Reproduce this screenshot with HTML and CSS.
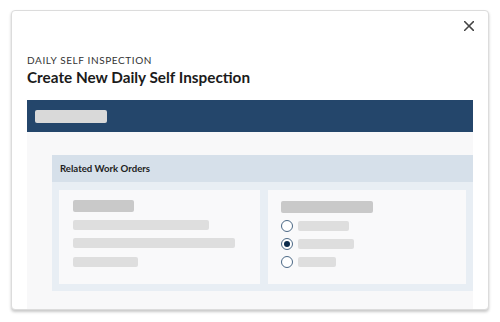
FILE: index.html
```html
<!DOCTYPE html>
<html lang="en">
<head>
<meta charset="utf-8">
<title>Create New Daily Self Inspection</title>
<link rel="stylesheet" href="styles.css">
</head>
<body>
<div class="modal">
  <div class="topbar">
    <button class="close" aria-label="Close">
      <svg width="10" height="10" viewBox="0 0 10 10"><path d="M0.6 0.6L9.4 9.4M9.4 0.6L0.6 9.4" stroke="#444" stroke-width="1.5" stroke-linecap="square" fill="none"/></svg>
    </button>
  </div>
  <div class="eyebrow">DAILY SELF INSPECTION</div>
  <h1 class="title">Create New Daily Self Inspection</h1>
  <div class="content">
    <div class="bluebar"><div class="ph ph-bar"></div></div>
    <div class="section">
      <div class="section-head">Related Work Orders</div>
      <div class="section-body">
        <div class="card card-left">
          <div class="ph ph-title w61"></div>
          <div class="ph ph-line w136 mt8"></div>
          <div class="ph ph-line w162 mt8"></div>
          <div class="ph ph-line w65 mt9"></div>
        </div>
        <div class="card card-right">
          <div class="ph ph-title w92"></div>
          <div class="radios">
            <div class="radio-row"><span class="radio"></span><span class="ph ph-line w51"></span></div>
            <div class="radio-row"><span class="radio checked"></span><span class="ph ph-line w56"></span></div>
            <div class="radio-row"><span class="radio"></span><span class="ph ph-line w38"></span></div>
          </div>
        </div>
      </div>
    </div>
  </div>
</div>
</body>
</html>
```
FILE: styles.css
```css
* { box-sizing: border-box; }
html, body { margin: 0; padding: 0; background: #ffffff; }
body {
  padding: 10px 11px;
  font-family: Lato, "Open Sans", sans-serif;
  color: #222;
}
.modal {
  width: 478px;
  height: 300px;
  border: 1px solid #dcdcdc;
  border-radius: 4px;
  background: #fff;
  box-shadow: 0 2px 3px rgba(0,0,0,0.22);
  padding: 0 15px;
  display: flex;
  flex-direction: column;
  overflow: hidden;
}
.topbar {
  height: 43px;
  display: flex;
  justify-content: flex-end;
  align-items: flex-start;
}
.close {
  margin-top: 10px;
  margin-right: -1px;
  padding: 0;
  border: 0;
  background: none;
  width: 10px;
  height: 10px;
  display: flex;
}
.eyebrow {
  font-size: 10px;
  line-height: 12px;
  letter-spacing: 0.6px;
  color: #333;
}
.title {
  margin: 2px 0 0;
  font-size: 15.3px;
  line-height: 18px;
  font-weight: 700;
  color: #1b1b1b;
}
.content {
  margin-top: 14px;
  flex: 1;
  background: #f8f8f9;
  display: flex;
  flex-direction: column;
}
.bluebar {
  height: 32px;
  background: #24466b;
  padding: 10px 8px;
}
.ph { display: block; border-radius: 2px; }
.ph-bar { width: 72px; height: 13px; background: #d9d9d9; }
.ph-title { height: 12px; background: #c9c9c9; }
.ph-line { height: 10px; background: #dedede; }
.w61 { width: 61px; }
.w92 { width: 92px; }
.w136 { width: 136px; }
.w162 { width: 162px; }
.w65 { width: 65px; }
.w51 { width: 51px; }
.w56 { width: 56px; }
.w38 { width: 38px; }
.mt8 { margin-top: 8px; }
.mt9 { margin-top: 9px; }
.section {
  margin: 23px 0 0 25px;
}
.section-head {
  height: 27px;
  background: #d6e0ea;
  padding-left: 8px;
  display: flex;
  align-items: center;
  font-size: 9.6px;
  font-weight: 700;
  color: #222;
}
.section-body {
  background: #e8eef4;
  padding: 8px 7px 7px;
  display: flex;
  gap: 8px;
}
.card {
  flex: 1;
  height: 94px;
  background: #f9f9fa;
}
.card-left { padding: 10px 14px; }
.card-right { padding: 11px 13px; }
.radios {
  margin-top: 7px;
  display: flex;
  flex-direction: column;
  gap: 6px;
}
.radio-row {
  height: 12px;
  display: flex;
  align-items: center;
  gap: 5px;
}
.radio {
  width: 12px;
  height: 12px;
  border: 1px solid #4b6885;
  border-radius: 50%;
  background: #fff;
  display: flex;
  align-items: center;
  justify-content: center;
}
.radio.checked::after {
  content: "";
  width: 6px;
  height: 6px;
  border-radius: 50%;
  background: #0d2c4c;
}
```
